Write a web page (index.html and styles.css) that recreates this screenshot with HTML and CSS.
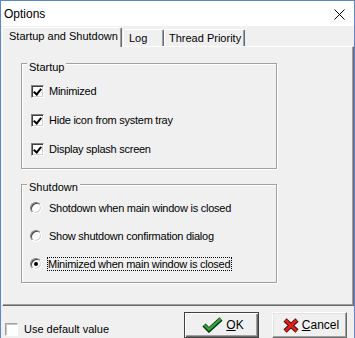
FILE: index.html
```html
<!DOCTYPE html>
<html lang="en">
<head>
    <meta charset="UTF-8">
    <title>Options</title>
    <link rel="stylesheet" href="styles.css">
</head>
<body>
    <div class="window">
        <div class="titlebar">
            <span class="title">Options</span>
            <svg class="close" width="11" height="11" viewBox="0 0 11 11">
                <path d="M0.5 0.5 L10.5 10.5 M10.5 0.5 L0.5 10.5" stroke="#000" stroke-width="1" fill="none"/>
            </svg>
        </div>

        <div class="client">
            <div class="tabs">
                <div class="tab active">Startup and Shutdown</div>
                <div class="tab tab-log">Log</div>
                <div class="tab tab-thread">Thread Priority</div>
            </div>

            <div class="page">
                <div class="group group-startup">
                    <span class="group-title">Startup</span>
                    <div class="option"><span class="check checked"></span><span class="label">Minimized</span></div>
                    <div class="option"><span class="check checked"></span><span class="label">Hide icon from system tray</span></div>
                    <div class="option"><span class="check checked"></span><span class="label">Display splash screen</span></div>
                </div>

                <div class="group group-shutdown">
                    <span class="group-title">Shutdown</span>
                    <div class="option radio-option"><span class="radio"></span><span class="label radio-label">Shotdown when main window is closed</span></div>
                    <div class="option radio-option"><span class="radio"></span><span class="label radio-label">Show shutdown confirmation dialog</span></div>
                    <div class="option radio-option"><span class="radio selected"></span><span class="label radio-label focused">Minimized when main window is closed</span></div>
                </div>
            </div>

            <div class="footer">
                <div class="option footer-option"><span class="check flat"></span><span>Use default value</span></div>

                <button class="btn btn-default">
                    <svg width="21" height="16" viewBox="0 0 21 16">
                        <polyline points="2,8 7,13 19,2" stroke="#14331a" stroke-width="4.5" fill="none" stroke-linejoin="miter"/>
                        <polyline points="2.5,8 7,12.3 18.5,2" stroke="#2ea836" stroke-width="2.4" fill="none"/>
                    </svg>
                    <span><u>O</u>K</span>
                </button>
                <button class="btn btn-cancel">
                    <svg width="16" height="15" viewBox="0 0 16 15">
                        <path d="M2 2 L14 13 M14 2 L2 13" stroke="#4a0a0a" stroke-width="4.5" fill="none"/>
                        <path d="M2.5 2.3 L13.5 12.7 M13.5 2.3 L2.5 12.7" stroke="#e0201a" stroke-width="2.6" fill="none"/>
                    </svg>
                    <span><u>C</u>ancel</span>
                </button>
            </div>
        </div>
    </div>
</body>
</html>
```

FILE: styles.css
```css
* {
    margin: 0;
    padding: 0;
    box-sizing: border-box;
}

body {
    font-family: "Liberation Sans", Arial, sans-serif;
    font-size: 11px;
    color: #000;
    background-color: #fff;
}

.window {
    width: 355px;
    height: 338px;
    border: 1px solid #5b87cf;
    border-bottom: none;
    display: flex;
    flex-direction: column;
    overflow: hidden;
}

.titlebar {
    height: 25px;
    background-color: #fff;
    display: flex;
    justify-content: space-between;
    align-items: center;
    padding: 0 9px 0 3px;
}

.title {
    font-size: 12px;
    color: #000;
}

.close {
    display: block;
    margin-top: 1px;
}

.client {
    flex: 1;
    background-color: #f0f0f0;
    display: flex;
    flex-direction: column;
}

/* tabs */
.tabs {
    height: 21px;
    margin-bottom: -1px;
    padding-left: 1px;
    display: flex;
    align-items: flex-end;
    position: relative;
    z-index: 1;
}

.tab {
    height: 17px;
    margin-bottom: 1px;
    padding: 2px 0 0 5px;
    line-height: 13px;
    white-space: nowrap;
    background-color: #f0f0f0;
    border-top: 1px solid #fff;
    border-left: 1px solid #fff;
    border-right: 1px solid #696969;
    box-shadow: inset -1px 0 0 #a0a0a0;
    border-radius: 2px 2px 0 0;
}

.tab.active {
    width: 120px;
    height: 20px;
    margin-bottom: 0;
    padding: 2px 0 0 6px;
}

.tab-log {
    width: 41px;
    margin-left: 1px;
}

.tab-thread {
    width: 81px;
    padding-left: 4px;
}

/* page */
.page {
    width: 352px;
    height: 260px;
    margin-left: 1px;
    border-top: 1px solid #fff;
    border-left: 1px solid #fff;
    border-right: 1px solid #696969;
    border-bottom: 1px solid #696969;
    box-shadow: inset -1px -1px 0 #a0a0a0;
    padding: 16px 0 0 18px;
}

.group {
    position: relative;
    width: 256px;
    border: 1px solid #a0a0a0;
    box-shadow: inset 1px 1px 0 #fff, 1px 1px 0 #fff;
    display: flex;
    flex-direction: column;
}

.group-title {
    position: absolute;
    top: -3px;
    left: 5px;
    padding: 0 2px;
    line-height: 13px;
    background-color: #f0f0f0;
}

.group-startup {
    height: 106px;
    padding: 21px 0 0 9px;
    gap: 16px;
}

.group-shutdown {
    height: 99px;
    margin-top: 15px;
    padding: 17px 0 0 8px;
    gap: 16px;
}

.group-shutdown .group-title {
    top: -4px;
}

/* checkboxes and radios */
.option {
    display: flex;
    align-items: center;
    height: 13px;
    line-height: 13px;
    white-space: nowrap;
}

.label {
    letter-spacing: -0.25px;
}

.check {
    width: 13px;
    height: 13px;
    margin-right: 5px;
    background-color: #fff;
    border: 1px solid;
    border-color: #808080 #fff #fff #808080;
    box-shadow: inset 1px 1px 0 #404040, inset -1px -1px 0 #d4d0c8;
    position: relative;
}

.check.checked::after {
    content: "";
    position: absolute;
    left: 3px;
    top: 1px;
    width: 3px;
    height: 6px;
    border-right: 2px solid #000;
    border-bottom: 2px solid #000;
    transform: rotate(40deg);
}

.check.flat {
    border-color: #a0a0a0 #fff #fff #a0a0a0;
    box-shadow: inset 1px 1px 0 #c8c8c8;
    margin-right: 6px;
}

.radio-option {
    height: 12px;
}

.radio {
    width: 12px;
    height: 12px;
    border-radius: 50%;
    background-color: #fff;
    border: 1px solid;
    border-color: #808080 #fff #fff #808080;
    box-shadow: inset 1px 1px 0 #404040, inset -1px -1px 0 #d4d0c8;
    margin-right: 5px;
    position: relative;
}

.radio.selected::after {
    content: "";
    position: absolute;
    left: 3px;
    top: 3px;
    width: 4px;
    height: 4px;
    border-radius: 50%;
    background-color: #000;
}

.radio-label {
    padding-left: 1px;
    border: 1px solid transparent;
    line-height: 12px;
}

.radio-label.focused {
    border: 1px dotted #000;
    padding-left: 0;
    padding-right: 1px;
}

/* footer */
.footer {
    flex: 1;
    display: flex;
    align-items: flex-start;
    padding: 6px 7px 0 4px;
}

.footer-option {
    margin-top: 11px;
}

.btn {
    width: 75px;
    height: 26px;
    font-family: inherit;
    font-size: 12px;
    color: #000;
    background-color: #f0f0f0;
    border: 1px solid;
    border-color: #fff #696969 #696969 #fff;
    box-shadow: inset -1px -1px 0 #a0a0a0, inset 1px 1px 0 #e3e3e3;
    display: flex;
    align-items: center;
    justify-content: center;
    gap: 3px;
    padding-left: 3px;
}

.btn svg {
    display: block;
}

.btn-default {
    margin-left: auto;
    border-color: #404040;
    box-shadow: inset 1px 1px 0 #fff, inset -1px -1px 0 #696969, inset -2px -2px 0 #a0a0a0;
}

.btn-cancel {
    margin-left: 13px;
}
```
